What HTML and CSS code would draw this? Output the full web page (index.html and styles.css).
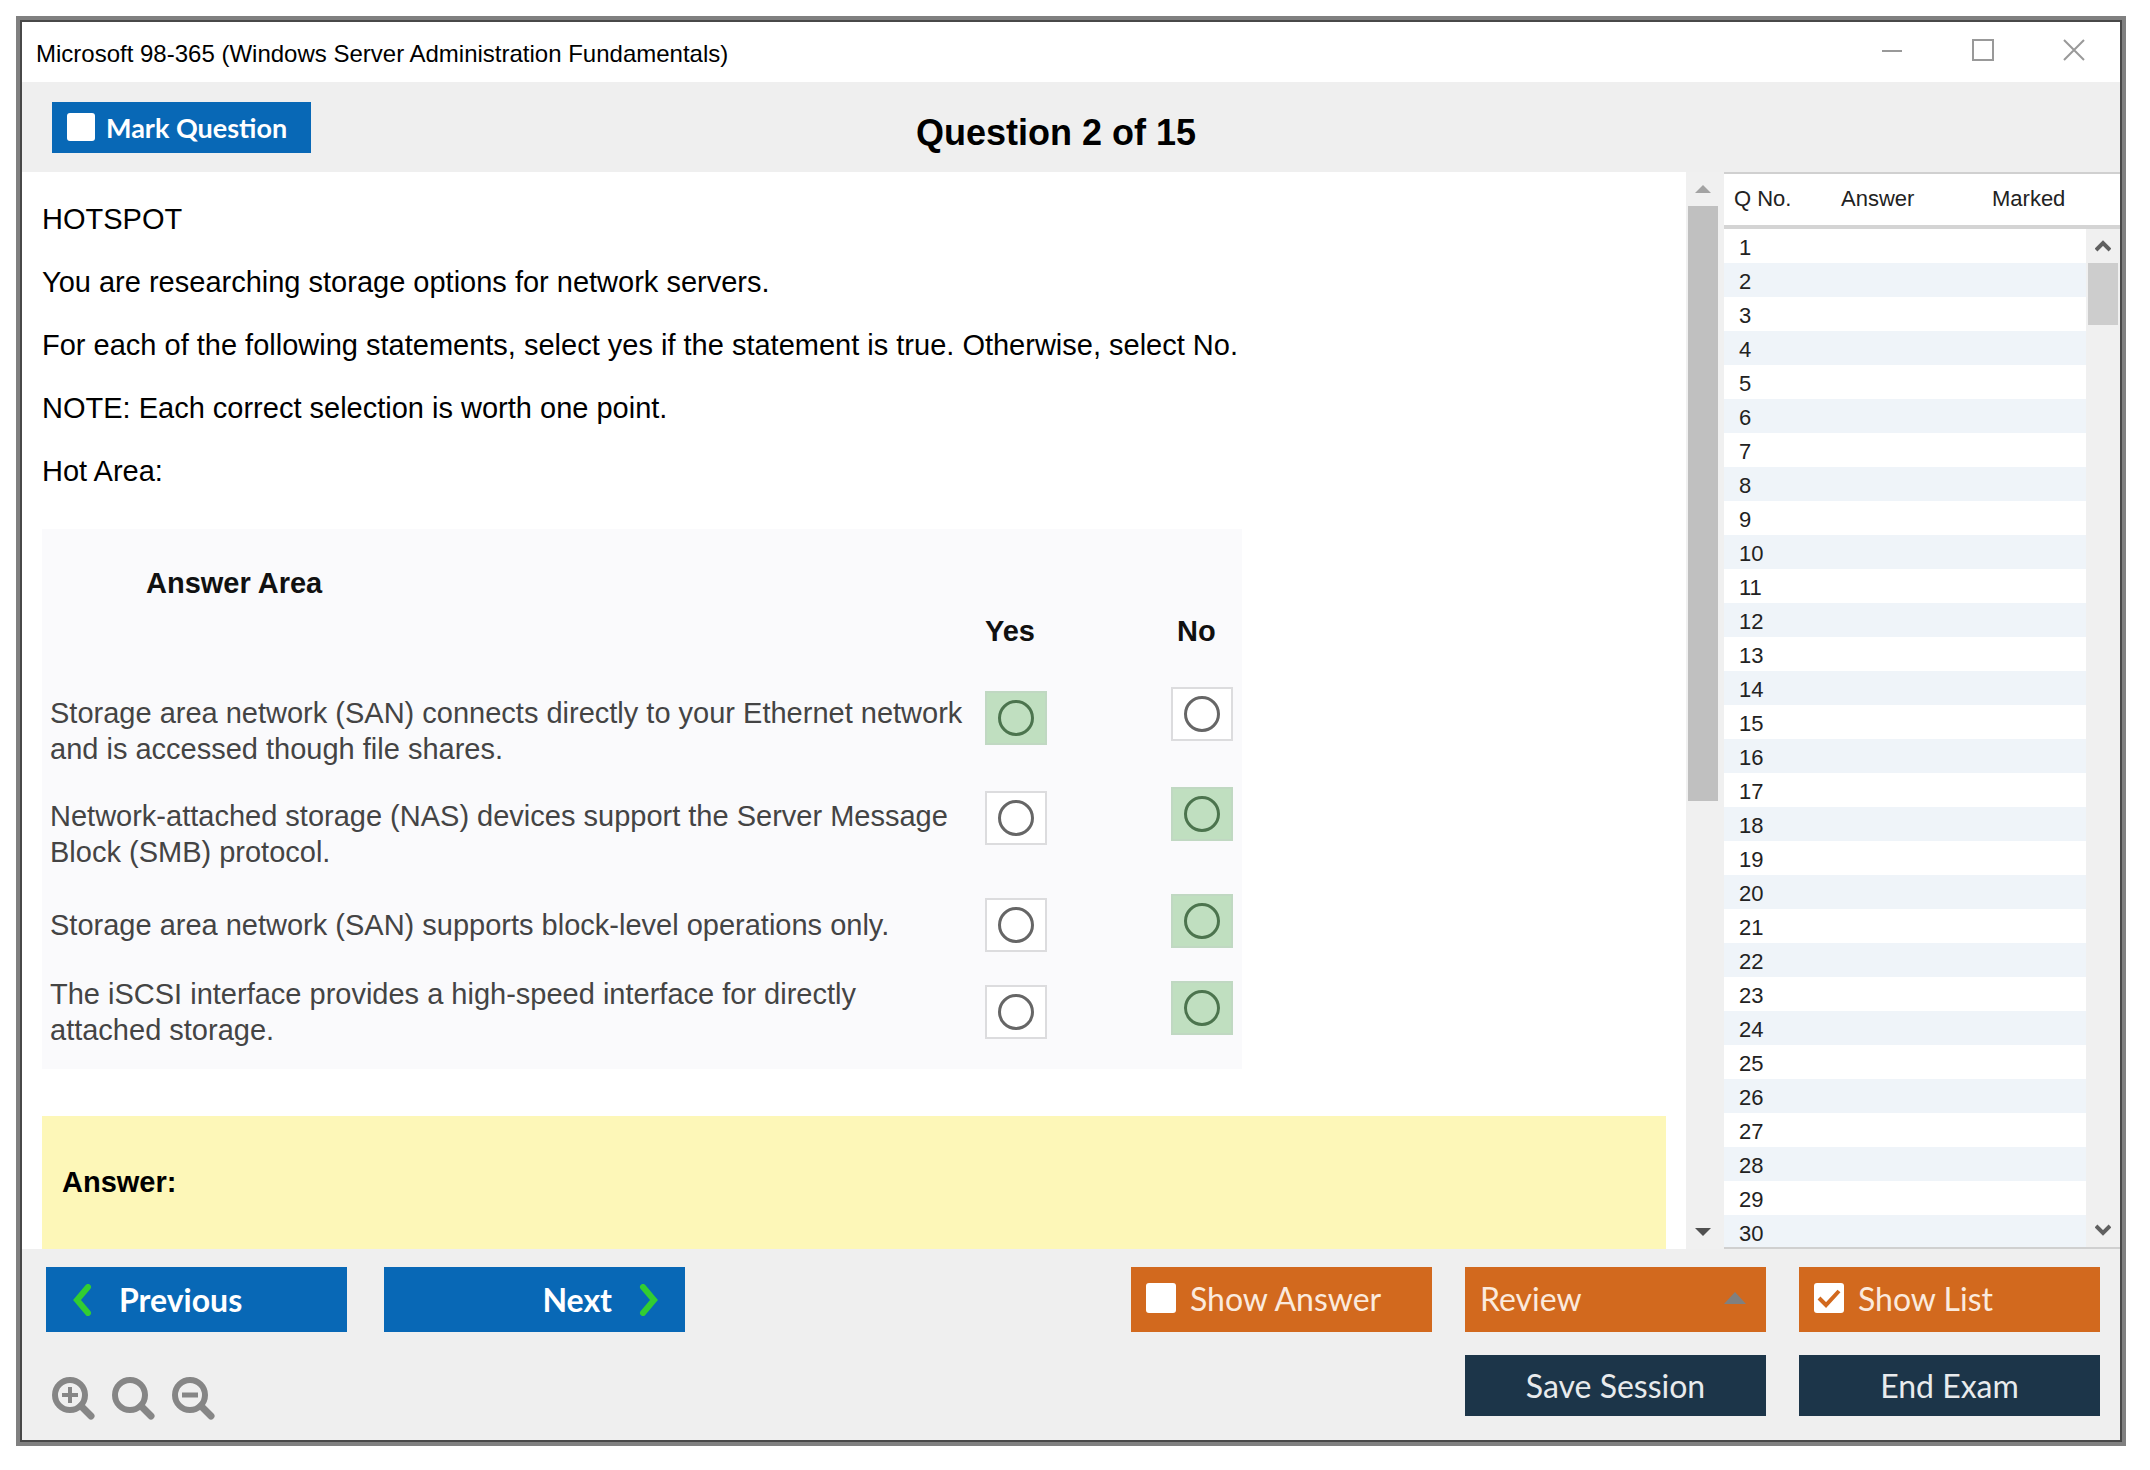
FILE: index.html
```html
<!DOCTYPE html>
<html lang="en">
<head>
    <meta charset="UTF-8">
    <title>Microsoft 98-365 (Windows Server Administration Fundamentals)</title>
    <link rel="stylesheet" href="styles.css">
</head>
<body>
    <div class="window">
        <header class="titlebar">
            <span class="window-title">Microsoft 98-365 (Windows Server Administration Fundamentals)</span>
            <div class="window-controls">
                <button type="button" aria-label="Minimize"><svg width="22" height="22" viewBox="0 0 22 22"><path d="M1 12h20"/></svg></button>
                <button type="button" aria-label="Maximize"><svg width="22" height="22" viewBox="0 0 22 22"><path d="M1 1h20v20H1z"/></svg></button>
                <button type="button" aria-label="Close"><svg width="22" height="22" viewBox="0 0 22 22"><path d="M1 1l20 20M21 1L1 21"/></svg></button>
            </div>
        </header>

        <div class="toolbar">
            <label class="mark"><input type="checkbox" class="check small"> Mark Question</label>
            <h1>Question 2 of 15</h1>
        </div>

        <main class="main">
            <section class="question">
                <p>HOTSPOT</p>
                <p>You are researching storage options for network servers.</p>
                <p>For each of the following statements, select yes if the statement is true. Otherwise, select No.</p>
                <p>NOTE: Each correct selection is worth one point.</p>
                <p>Hot Area:</p>

                <div class="answer-area">
                    <h2>Answer Area</h2>
                    <table class="statements">
                        <thead>
                            <tr><td></td><th class="yes" id="yes">Yes</th><th class="no" id="no">No</th></tr>
                        </thead>
                        <tbody>
                            <tr class="first">
                                <td id="s1">Storage area network (SAN) connects directly to your Ethernet network<br>and is accessed though file shares.</td>
                                <td class="yes"><label class="spot selected"><input type="radio" name="q1" aria-labelledby="s1 yes"></label></td>
                                <td class="no"><label class="spot"><input type="radio" name="q1" aria-labelledby="s1 no"></label></td>
                            </tr>
                            <tr class="second">
                                <td id="s2">Network-attached storage (NAS) devices support the Server Message<br>Block (SMB) protocol.</td>
                                <td class="yes"><label class="spot"><input type="radio" name="q2" aria-labelledby="s2 yes"></label></td>
                                <td class="no"><label class="spot selected"><input type="radio" name="q2" aria-labelledby="s2 no"></label></td>
                            </tr>
                            <tr class="short">
                                <td id="s3">Storage area network (SAN) supports block-level operations only.</td>
                                <td class="yes"><label class="spot"><input type="radio" name="q3" aria-labelledby="s3 yes"></label></td>
                                <td class="no"><label class="spot selected"><input type="radio" name="q3" aria-labelledby="s3 no"></label></td>
                            </tr>
                            <tr class="last">
                                <td id="s4">The iSCSI interface provides a high-speed interface for directly<br>attached storage.</td>
                                <td class="yes"><label class="spot"><input type="radio" name="q4" aria-labelledby="s4 yes"></label></td>
                                <td class="no"><label class="spot selected"><input type="radio" name="q4" aria-labelledby="s4 no"></label></td>
                            </tr>
                        </tbody>
                    </table>
                </div>

                <div class="answer">Answer:</div>
            </section>

            <div class="scrollbar">
                <button type="button" aria-label="Scroll up"><svg width="16" height="8" viewBox="0 0 16 8"><path d="M0 8L8 0l8 8z" fill="#a3a3a3"/></svg></button>
                <div class="track"><div class="thumb"></div></div>
                <button type="button" aria-label="Scroll down"><svg width="16" height="8" viewBox="0 0 16 8"><path d="M0 0h16L8 8z" fill="#505050"/></svg></button>
            </div>

            <aside class="list">
                <table class="numbers">
                    <thead>
                        <tr><th>Q No.</th><th>Answer</th><th>Marked</th></tr>
                    </thead>
                    <tbody>
                        <tr><td>1</td><td></td><td></td></tr>
                        <tr><td>2</td><td></td><td></td></tr>
                        <tr><td>3</td><td></td><td></td></tr>
                        <tr><td>4</td><td></td><td></td></tr>
                        <tr><td>5</td><td></td><td></td></tr>
                        <tr><td>6</td><td></td><td></td></tr>
                        <tr><td>7</td><td></td><td></td></tr>
                        <tr><td>8</td><td></td><td></td></tr>
                        <tr><td>9</td><td></td><td></td></tr>
                        <tr><td>10</td><td></td><td></td></tr>
                        <tr><td>11</td><td></td><td></td></tr>
                        <tr><td>12</td><td></td><td></td></tr>
                        <tr><td>13</td><td></td><td></td></tr>
                        <tr><td>14</td><td></td><td></td></tr>
                        <tr><td>15</td><td></td><td></td></tr>
                        <tr><td>16</td><td></td><td></td></tr>
                        <tr><td>17</td><td></td><td></td></tr>
                        <tr><td>18</td><td></td><td></td></tr>
                        <tr><td>19</td><td></td><td></td></tr>
                        <tr><td>20</td><td></td><td></td></tr>
                        <tr><td>21</td><td></td><td></td></tr>
                        <tr><td>22</td><td></td><td></td></tr>
                        <tr><td>23</td><td></td><td></td></tr>
                        <tr><td>24</td><td></td><td></td></tr>
                        <tr><td>25</td><td></td><td></td></tr>
                        <tr><td>26</td><td></td><td></td></tr>
                        <tr><td>27</td><td></td><td></td></tr>
                        <tr><td>28</td><td></td><td></td></tr>
                        <tr><td>29</td><td></td><td></td></tr>
                        <tr><td>30</td><td></td><td></td></tr>
                    </tbody>
                </table>
                <div class="list-side">
                    <div class="list-corner"></div>
                    <div class="scrollbar list-scroll">
                        <button type="button" aria-label="Scroll list up"><svg width="16" height="12" viewBox="0 0 16 12"><path d="M1 10l7-7 7 7" fill="none" stroke="#606060" stroke-width="4"/></svg></button>
                        <div class="track"><div class="thumb"></div></div>
                        <button type="button" aria-label="Scroll list down"><svg width="16" height="12" viewBox="0 0 16 12"><path d="M1 2l7 7 7-7" fill="none" stroke="#606060" stroke-width="4"/></svg></button>
                    </div>
                </div>
            </aside>
        </main>

        <footer class="footer">
            <div class="row">
                <button type="button" class="btn nav">
                    <svg width="20" height="32" viewBox="0 0 20 32"><path d="M16 3L5 16l11 13"/></svg>
                    Previous
                </button>
                <button type="button" class="btn nav next">
                    Next
                    <svg width="20" height="32" viewBox="0 0 20 32"><path d="M4 3l11 13L4 29"/></svg>
                </button>
                <div class="actions">
                    <label class="btn orange"><input type="checkbox" class="check"> Show Answer</label>
                    <div class="review">
                        <select class="btn orange" aria-label="Review"><option>Review</option></select>
                        <svg width="22" height="12" viewBox="0 0 22 12"><path d="M0 12L11 0l11 12z" fill="#808080"/></svg>
                    </div>
                    <label class="btn orange"><input type="checkbox" class="check" checked> Show List</label>
                </div>
            </div>
            <div class="row">
                <div class="zoom">
                    <button type="button" aria-label="Zoom in"><svg width="44" height="44" viewBox="0 0 44 44"><circle cx="18" cy="18" r="15"/><path d="M29 29l10 10" stroke-width="7"/><path d="M10 18h16M18 10v16" stroke-width="4" stroke-linecap="butt"/></svg></button>
                    <button type="button" aria-label="Reset zoom"><svg width="44" height="44" viewBox="0 0 44 44"><circle cx="18" cy="18" r="15"/><path d="M29 29l10 10" stroke-width="7"/></svg></button>
                    <button type="button" aria-label="Zoom out"><svg width="44" height="44" viewBox="0 0 44 44"><circle cx="18" cy="18" r="15"/><path d="M29 29l10 10" stroke-width="7"/><path d="M10 18h16" stroke-width="5" stroke-linecap="butt"/></svg></button>
                </div>
                <div class="actions">
                    <button type="button" class="btn dark">Save Session</button>
                    <button type="button" class="btn dark">End Exam</button>
                </div>
            </div>
        </footer>
    </div>
</body>
</html>
```
FILE: styles.css
```css
* { box-sizing: border-box; }
body {
    margin: 0; padding: 16px 24px 24px 16px; height: 100vh; background: #fff; color: #000;
    font-family: "Liberation Sans", Arial, sans-serif; font-size: 29px;
}
button { padding: 0; border: none; background: none; cursor: pointer; }
svg { display: block; }

.window {
    height: 100%; display: flex; flex-direction: column;
    border: 4px solid #808080; outline: 2px solid #484848; outline-offset: -6px; padding: 2px;
}

.titlebar { height: 60px; flex-shrink: 0; display: flex; justify-content: space-between; padding: 0 35px 0 14px; }
.window-title { font-size: 24px; line-height: 64px; }
.window-controls { display: flex; align-items: center; gap: 69px; padding-bottom: 4px; }
.window-controls svg { fill: none; stroke: #999; stroke-width: 2; }

.toolbar {
    height: 90px; flex-shrink: 0; padding: 0 30px; background: #efefef;
    display: grid; grid-template-columns: 1fr auto 1fr; align-items: center;
}
.toolbar h1 { margin: 0; padding: 12px 30px 0 0; font-size: 36px; line-height: 40px; }
.mark {
    justify-self: start; height: 51px; padding: 0 24px 0 15px; display: flex; align-items: center; gap: 11px;
    background: #0868b6; color: #fff; font: bold 27px Lato, sans-serif;
}
.check {
    appearance: none; margin: 0; width: 30px; height: 30px; flex-shrink: 0; border-radius: 3px; background: #fff;
}
.check.small { width: 28px; height: 28px; }
.check:checked {
    background: #fff url("data:image/svg+xml,%3Csvg xmlns='http://www.w3.org/2000/svg' viewBox='0 0 30 30'%3E%3Cpath d='M5 15l7 7L25 8' fill='none' stroke='%23d2691e' stroke-width='4'/%3E%3C/svg%3E");
}

.main { flex: 1; min-height: 0; display: flex; }
.question { flex: 1; overflow: hidden; padding: 31px 20px 0; }
.question p { margin: 0 0 30px; line-height: 33px; }

.answer-area { max-width: 1200px; height: 540px; margin-top: 41px; padding: 36px 0 0; background: #fafafc; }
.answer-area h2 { margin: 0 0 0 104px; font-size: 29px; line-height: 36px; color: #111; }
.statements { width: 100%; border-collapse: collapse; color: #444; font-size: 29px; line-height: 36px; }
.statements td, .statements th { padding: 0; text-align: left; }
.statements td:first-child { padding-left: 8px; white-space: nowrap; }
.statements th { height: 80px; vertical-align: top; padding-top: 12px; color: #111; font-size: 29px; }
.statements .yes { width: 186px; }
.statements .no { width: 71px; }
.statements th.no { padding-left: 6px; }
.statements td.yes { padding: 10px 0; }
.statements td.no { padding: 6px 0 14px; }
.statements .first td { height: 100px; }
.statements .second td { height: 106px; }
.statements .first .yes, .statements .first .no, .statements .second .yes, .statements .second .no { vertical-align: top; }
.statements .short td { height: 76px; }
.statements .last td { height: 98px; }
.spot {
    display: flex; align-items: center; justify-content: center; width: 62px; height: 54px;
    background: #fff; border: 2px solid #dcdcde;
}
.spot input { appearance: none; margin: 0; width: 36px; height: 36px; border: 3px solid #666; border-radius: 50%; }
.selected { background: #c0dfc0; border-color: #c0d8c2; }
.selected input { border-color: #4c744e; }

.answer { margin-top: 47px; padding: 48px 20px 80px; background: #fdf7b8; font-weight: bold; line-height: 36px; }

.scrollbar { width: 38px; display: flex; flex-direction: column; padding: 0 6px 0 2px; background: #f0f0f0; }
.scrollbar button { height: 34px; flex-shrink: 0; display: flex; align-items: center; justify-content: center; }
.track { flex: 1; }
.thumb { height: 59%; background: #c0c0c0; }

.list { width: 396px; display: flex; overflow: hidden; border-bottom: 2px solid #d0d0d0; }
.numbers { flex: 1; align-self: flex-start; table-layout: fixed; border-collapse: separate; border-spacing: 0; font-size: 22px; line-height: 26px; color: #222; }
.numbers th, .list-corner { height: 57px; border-top: 2px solid #d0d0d0; border-bottom: 4px solid #d4d4d4; }
.numbers th { padding: 0 0 2px 10px; text-align: left; font-weight: normal; }
.numbers th:first-child { width: 107px; }
.numbers th:nth-child(2) { width: 151px; }
.numbers td { height: 34px; padding: 3px 0 0 15px; }
.numbers tr:nth-child(even) td { background: #eff4f9; }
.list-side { width: 34px; display: flex; flex-direction: column; }
.list-scroll { flex: 1; width: 34px; padding: 0 2px; }
.list-scroll .thumb { height: 62px; background: #cdcdcd; }

.footer { height: 191px; flex-shrink: 0; padding: 18px 20px 0 24px; background: #efefef; display: flex; flex-direction: column; gap: 23px; }
.row { display: flex; gap: 37px; align-items: flex-start; }
.actions { margin-left: auto; display: flex; gap: 33px; }
.btn {
    width: 301px; height: 65px; display: flex; align-items: center; gap: 14px; padding: 0 15px;
    border: none; border-radius: 0; color: #fff; font: 32px Lato, sans-serif;
}
.nav { background: #0868b6; font-weight: bold; padding: 0 26px; gap: 27px; }
.nav svg { fill: none; stroke: #32cd32; stroke-width: 6; stroke-linecap: round; }
.next { justify-content: flex-end; }
.orange { background: #d2691e; color: #fbeadd; padding-bottom: 3px; }
.review { position: relative; }
.review select { appearance: none; }
.review svg { position: absolute; right: 20px; top: 25px; pointer-events: none; }
.dark { height: 61px; justify-content: center; background: #1c3549; color: #e8ebed; }
.zoom { display: flex; gap: 16px; padding: 22px 0 0 6px; }
.zoom svg { fill: none; stroke: #868686; stroke-width: 6; stroke-linecap: round; }
```
